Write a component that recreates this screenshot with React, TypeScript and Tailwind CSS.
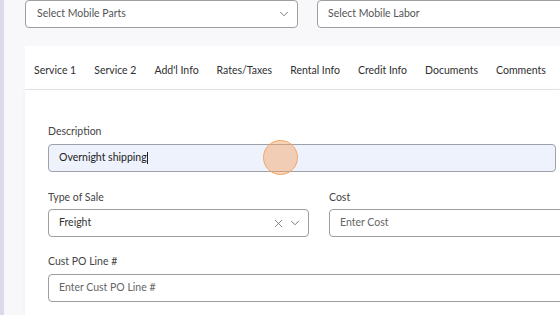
import { ChevronDown, X } from "lucide-react";

const tabs = [
  "Service 1",
  "Service 2",
  "Add'l Info",
  "Rates/Taxes",
  "Rental Info",
  "Credit Info",
  "Documents",
  "Comments",
];

const font = { fontFamily: "Lato, 'Noto Sans', sans-serif" };

export default function App() {
  return (
    <div
      className="relative w-[560px] h-[315px] overflow-hidden flex bg-[#f8f8fa] text-[#333]"
      style={font}
    >
      {/* Left rail */}
      <div className="w-[4px] shrink-0 bg-[#dcdae8]" />

      <div className="flex-1 min-w-0 pl-[21px] flex flex-col">
        {/* Parts / labor selects */}
        <div className="flex gap-[19px] shrink-0">
          <div className="w-[273px] h-[28px] shrink-0 flex items-center justify-between pl-[11px] pr-[6px] bg-white border border-[#9e9e9e] rounded-[4px]">
            <span className="text-[10.5px] text-[#555]">Select Mobile Parts</span>
            <ChevronDown size={14} strokeWidth={1.5} className="text-[#666]" />
          </div>
          <div className="w-[300px] h-[28px] shrink-0 flex items-center pl-[10px] bg-white border border-[#9e9e9e] rounded-[4px]">
            <span className="text-[10.5px] text-[#555]">Select Mobile Labor</span>
          </div>
        </div>

        {/* Tabs */}
        <div className="mt-[18px] h-[44px] shrink-0 bg-white border-b border-[#e6e6e9] flex items-end pb-[12px] pl-[9px] gap-[18px] whitespace-nowrap">
          {tabs.map((t) => (
            <span key={t} className="text-[10.5px] leading-[14px] text-[#2f2f2f]">
              {t}
            </span>
          ))}
        </div>

        {/* Form card */}
        <div className="flex-1 bg-white pl-[23px] pt-[34px] shadow-[0_0_6px_rgba(0,0,0,0.04)]">
          <label className="block text-[10.5px] leading-[14px] text-[#444] mb-[6px]">Description</label>
          <div className="w-[508px] h-[28px] flex items-center pl-[10px] bg-[#eef2fd] border border-[#a0a0a8] rounded-[4px]">
            <span className="text-[10.5px] text-[#222]">Overnight shipping</span>
            <span className="w-px h-[12px] bg-[#222]" />
          </div>

          <div className="flex gap-[20px] mt-[18px]">
            <div className="w-[261px] shrink-0">
              <label className="block text-[10.5px] leading-[14px] text-[#444] mb-[5px]">Type of Sale</label>
              <div className="h-[28px] flex items-center justify-between pl-[10px] pr-[6px] border border-[#9e9e9e] rounded-[4px]">
                <span className="text-[10.5px] text-[#333]">Freight</span>
                <div className="flex items-center gap-[3px] text-[#666]">
                  <X size={13} strokeWidth={1.4} />
                  <ChevronDown size={14} strokeWidth={1.5} />
                </div>
              </div>
            </div>
            <div className="w-[261px] shrink-0">
              <label className="block text-[10.5px] leading-[14px] text-[#444] mb-[5px]">Cost</label>
              <div className="h-[28px] flex items-center pl-[10px] border border-[#9e9e9e] rounded-[4px]">
                <span className="text-[10.5px] text-[#666]">Enter Cost</span>
              </div>
            </div>
          </div>

          <div className="mt-[17px]">
            <label className="block text-[10.5px] leading-[14px] text-[#444] mb-[6px]">Cust PO Line #</label>
            <div className="w-[542px] h-[28px] flex items-center pl-[10px] border border-[#9e9e9e] rounded-[4px]">
              <span className="text-[10.5px] text-[#666]">Enter Cust PO Line #</span>
            </div>
          </div>
        </div>
      </div>

      {/* Click indicator */}
      <div className="absolute left-[263px] top-[140px] w-[35px] h-[35px] rounded-full bg-[rgba(245,160,95,0.45)] border border-[#f3a766]" />
    </div>
  );
}
